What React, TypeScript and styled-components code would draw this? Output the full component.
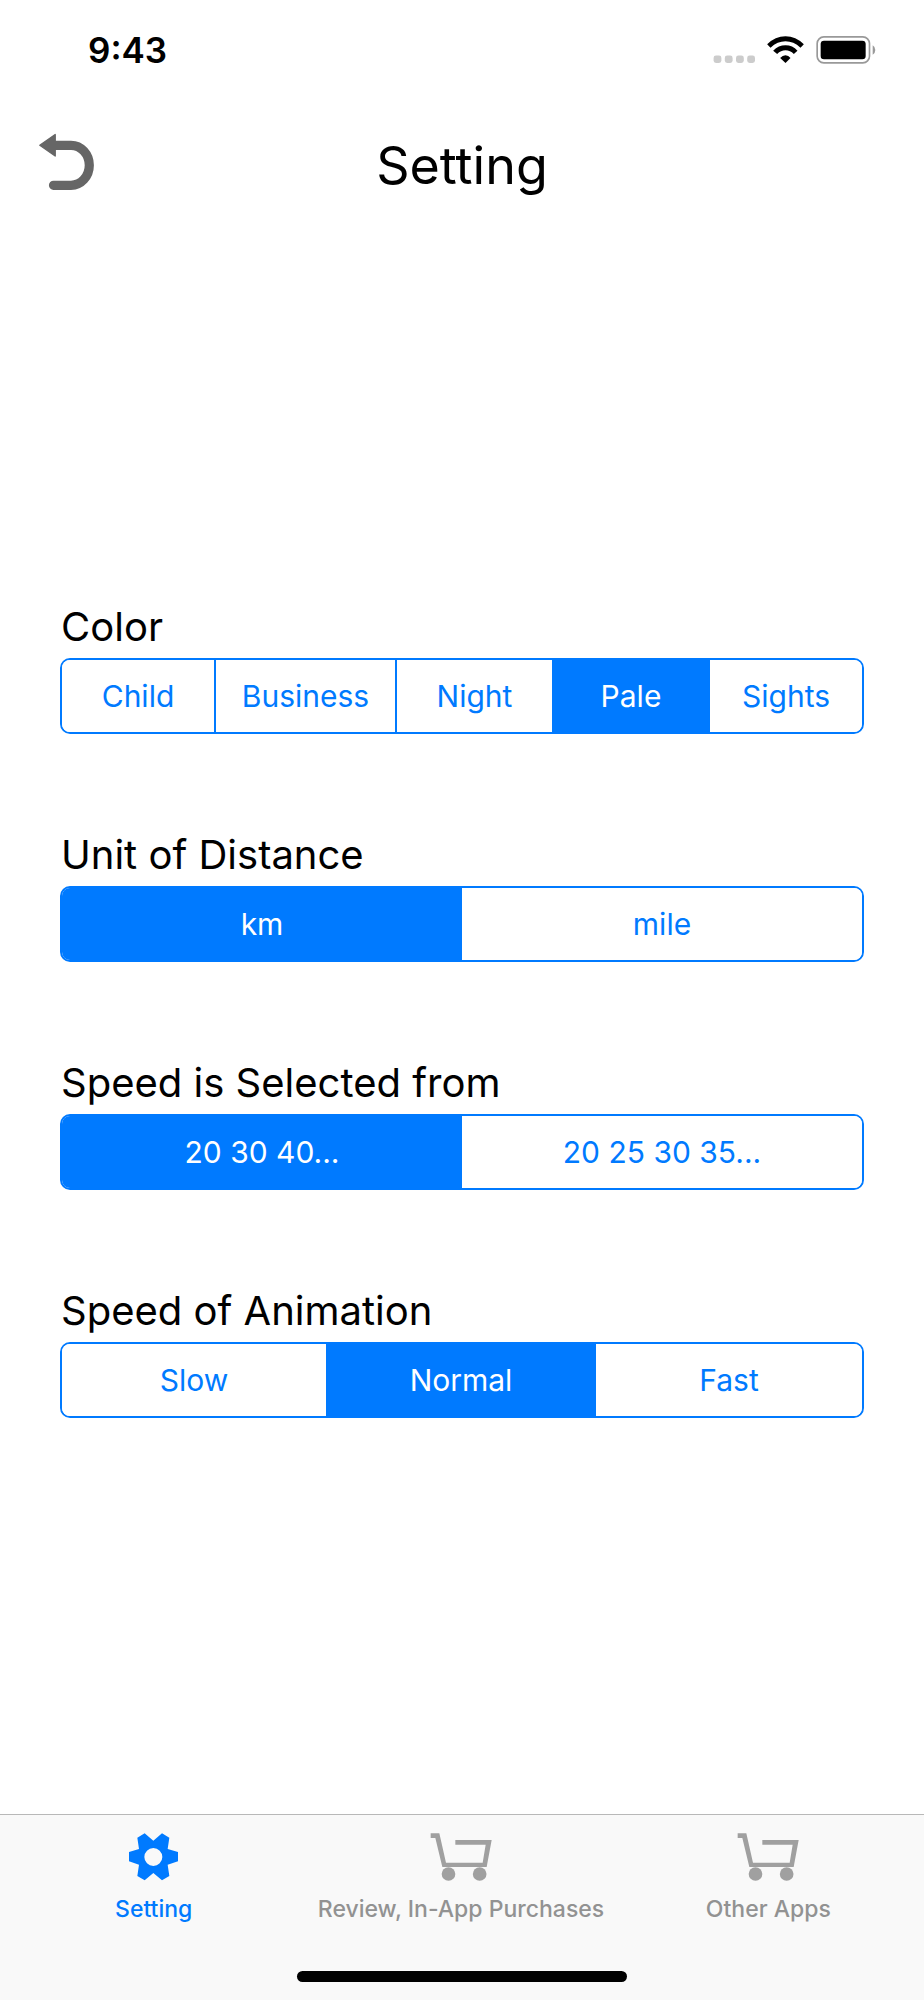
import { useState } from "react";
import styled, { createGlobalStyle } from "styled-components";

const GlobalStyle = createGlobalStyle`
  *, *::before, *::after { box-sizing: border-box; }
  body {
    margin: 0;
    background: #ffffff;
    color: #000000;
    font-family: Inter, "Liberation Sans", sans-serif;
  }
`;

const blue = "#007aff";

const Screen = styled.div`
  display: flex;
  flex-direction: column;
  min-height: 100vh;
`;

const StatusBar = styled.div`
  display: flex;
  align-items: center;
  justify-content: space-between;
  height: 100px;
  padding: 0 48px 0 88px;
`;

const Clock = styled.time`
  font-size: 35px;
  line-height: 44px;
  font-weight: 600;
`;

const StatusIcons = styled.div`
  display: flex;
  align-items: center;
  gap: 12px;
`;

const Header = styled.header`
  display: grid;
  grid-template-columns: 120px 1fr 120px;
  align-items: center;
  height: 106px;
  padding-top: 26px;
`;

const BackButton = styled.button`
  justify-self: start;
  display: flex;
  margin: 0 0 8px 36px;
  padding: 0;
  border: 0;
  background: none;
  cursor: pointer;
`;

const Title = styled.h1`
  margin: 0;
  font-size: 52px;
  line-height: 64px;
  font-weight: 400;
  text-align: center;
`;

const Main = styled.main`
  flex: 1;
  display: flex;
  flex-direction: column;
  justify-content: center;
  gap: 96px;
  padding: 0 60px;
`;

const Field = styled.fieldset`
  margin: 0;
  padding: 0;
  border: 0;
  min-width: 0;
`;

const Legend = styled.legend`
  margin-bottom: 6px;
  padding: 0 1px;
  font-size: 40px;
  line-height: 50px;
`;

const Segments = styled.div`
  display: flex;
  height: 76px;
  border: 2px solid ${blue};
  border-radius: 10px;
  overflow: hidden;
`;

const Segment = styled.label<{ $weight: number; $active: boolean; $divided: boolean }>`
  position: relative;
  flex: ${(p) => p.$weight} 1 0;
  min-width: 0;
  display: flex;
  align-items: center;
  justify-content: center;
  font-size: 30px;
  line-height: 40px;
  color: ${(p) => (p.$active ? "#ffffff" : blue)};
  background: ${(p) => (p.$active ? blue : "#ffffff")};
  border-right: ${(p) => (p.$divided ? 2 : 0)}px solid ${blue};
  cursor: pointer;
`;

const Radio = styled.input`
  position: absolute;
  inset: 0;
  margin: 0;
  appearance: none;
  cursor: pointer;
`;

const TabBar = styled.nav`
  display: flex;
  flex-direction: column;
  align-items: center;
  justify-content: space-between;
  height: 186px;
  padding: 18px 0;
  border-top: 1px solid #b8b8b8;
  background: #f9f9f9;
`;

const TabList = styled.div`
  display: grid;
  grid-template-columns: repeat(3, 1fr);
  width: 100%;
  padding-right: 2px;
`;

const Tab = styled.a<{ $active?: boolean }>`
  display: flex;
  flex-direction: column;
  align-items: center;
  gap: 13px;
  font-size: 23px;
  line-height: 30px;
  font-weight: 500;
  white-space: nowrap;
  text-decoration: none;
  color: ${(p) => (p.$active ? blue : "#929292")};
`;

const HomeIndicator = styled.div`
  width: 330px;
  height: 11px;
  border-radius: 6px;
  background: #000000;
`;

const BackIcon = () => (
  <svg width="60" height="60" viewBox="36 132 60 60" aria-hidden="true">
    <path d="M54 145.3H71A18.3 20 0 0 1 71 185.3H53.5" fill="none" stroke="#666666" strokeWidth="9.2" strokeLinecap="round" />
    <path d="M39.8 145.3L55.2 134.6V156Z" fill="#666666" stroke="#666666" strokeWidth="1.4" strokeLinejoin="round" />
  </svg>
);

const SignalIcon = () => (
  <svg width="42" height="28" viewBox="0 0 42 28" fill="#cccccc" aria-hidden="true">
    {[0.6, 11.8, 23, 34.2].map((x) => (
      <rect key={x} x={x} y="19.5" width="7.8" height="7.4" rx="2.4" />
    ))}
  </svg>
);

const WifiIcon = () => (
  <svg width="37" height="28" viewBox="233 49 110 84" aria-hidden="true">
    <path d="M233 74Q257 50 288 50T343 74L333 84Q312 65 288 65T243 84Z" />
    <path d="M251 93Q267 77 288 77T324 93L313 103Q302 92 288 92T263 103Z" />
    <path d="M272 115Q279 107 288 107T303 115L288 130Z" />
  </svg>
);

const BatteryIcon = () => (
  <svg width="60" height="28" viewBox="379 49 180 84" aria-hidden="true">
    <rect x="382.5" y="51.5" width="157" height="78" rx="20" fill="none" stroke="#999999" strokeWidth="5" />
    <rect x="393" y="63" width="135" height="56" rx="10" />
    <path d="M549 77Q557 82 557 91T549 105Z" fill="#999999" />
  </svg>
);

const GearIcon = () => (
  <svg width="49" height="48" viewBox="87 99 147 144" aria-hidden="true">
    <path
      fill="currentColor"
      fillRule="evenodd"
      d="M134 100L160 122L186 100L208 113L203 147L234 156V184L203 194L208 228L186 241L160 219L134 241L112 228L117 194L87 184V156L117 147L112 113ZM160 144A27 27 0 1 0 160 198A27 27 0 1 0 160 144Z"
    />
  </svg>
);

const CartIcon = () => (
  <svg width="62" height="48" viewBox="418 102 186 144" fill="#a0a0a0" aria-hidden="true">
    <path d="M420 103H446L466 191H576L585 137H494V123H603L588 204H455L434 117H420Z" />
    <circle cx="473.5" cy="225" r="20.5" />
    <circle cx="567" cy="225" r="20.5" />
  </svg>
);

type Option = { text: string; weight: number };

const option = (text: string, weight = 1): Option => ({ text, weight });

type SegmentedFieldProps = { name: string; title: string; options: Option[]; initial: string };

function SegmentedField({ name, title, options, initial }: SegmentedFieldProps) {
  const [value, setValue] = useState(initial);
  return (
    <Field>
      <Legend>{title}</Legend>
      <Segments>
        {options.map(({ text, weight }, i) => {
          const active = value === text;
          const next = options[i + 1];
          return (
            <Segment
              key={text}
              $weight={weight}
              $active={active}
              $divided={!active && next !== undefined && next.text !== value}
            >
              <Radio type="radio" name={name} value={text} checked={active} onChange={() => setValue(text)} />
              {text}
            </Segment>
          );
        })}
      </Segments>
    </Field>
  );
}

export default function App() {
  return (
    <Screen>
      <GlobalStyle />
      <StatusBar>
        <Clock>9:43</Clock>
        <StatusIcons>
          <SignalIcon />
          <WifiIcon />
          <BatteryIcon />
        </StatusIcons>
      </StatusBar>
      <Header>
        <BackButton type="button" aria-label="Back">
          <BackIcon />
        </BackButton>
        <Title>Setting</Title>
      </Header>
      <Main>
        <SegmentedField
          name="color"
          title="Color"
          initial="Pale"
          options={[
            option("Child", 152),
            option("Business", 179),
            option("Night", 155),
            option("Pale", 158),
            option("Sights", 152),
          ]}
        />
        <SegmentedField name="unit" title="Unit of Distance" initial="km" options={[option("km"), option("mile")]} />
        <SegmentedField
          name="speed"
          title="Speed is Selected from"
          initial="20 30 40..."
          options={[option("20 30 40..."), option("20 25 30 35...")]}
        />
        <SegmentedField
          name="animation"
          title="Speed of Animation"
          initial="Normal"
          options={[option("Slow", 264), option("Normal", 270), option("Fast", 266)]}
        />
      </Main>
      <TabBar>
        <TabList>
          <Tab href="#setting" $active aria-current="page">
            <GearIcon />
            Setting
          </Tab>
          <Tab href="#review">
            <CartIcon />
            Review, In-App Purchases
          </Tab>
          <Tab href="#apps">
            <CartIcon />
            Other Apps
          </Tab>
        </TabList>
        <HomeIndicator />
      </TabBar>
    </Screen>
  );
}
